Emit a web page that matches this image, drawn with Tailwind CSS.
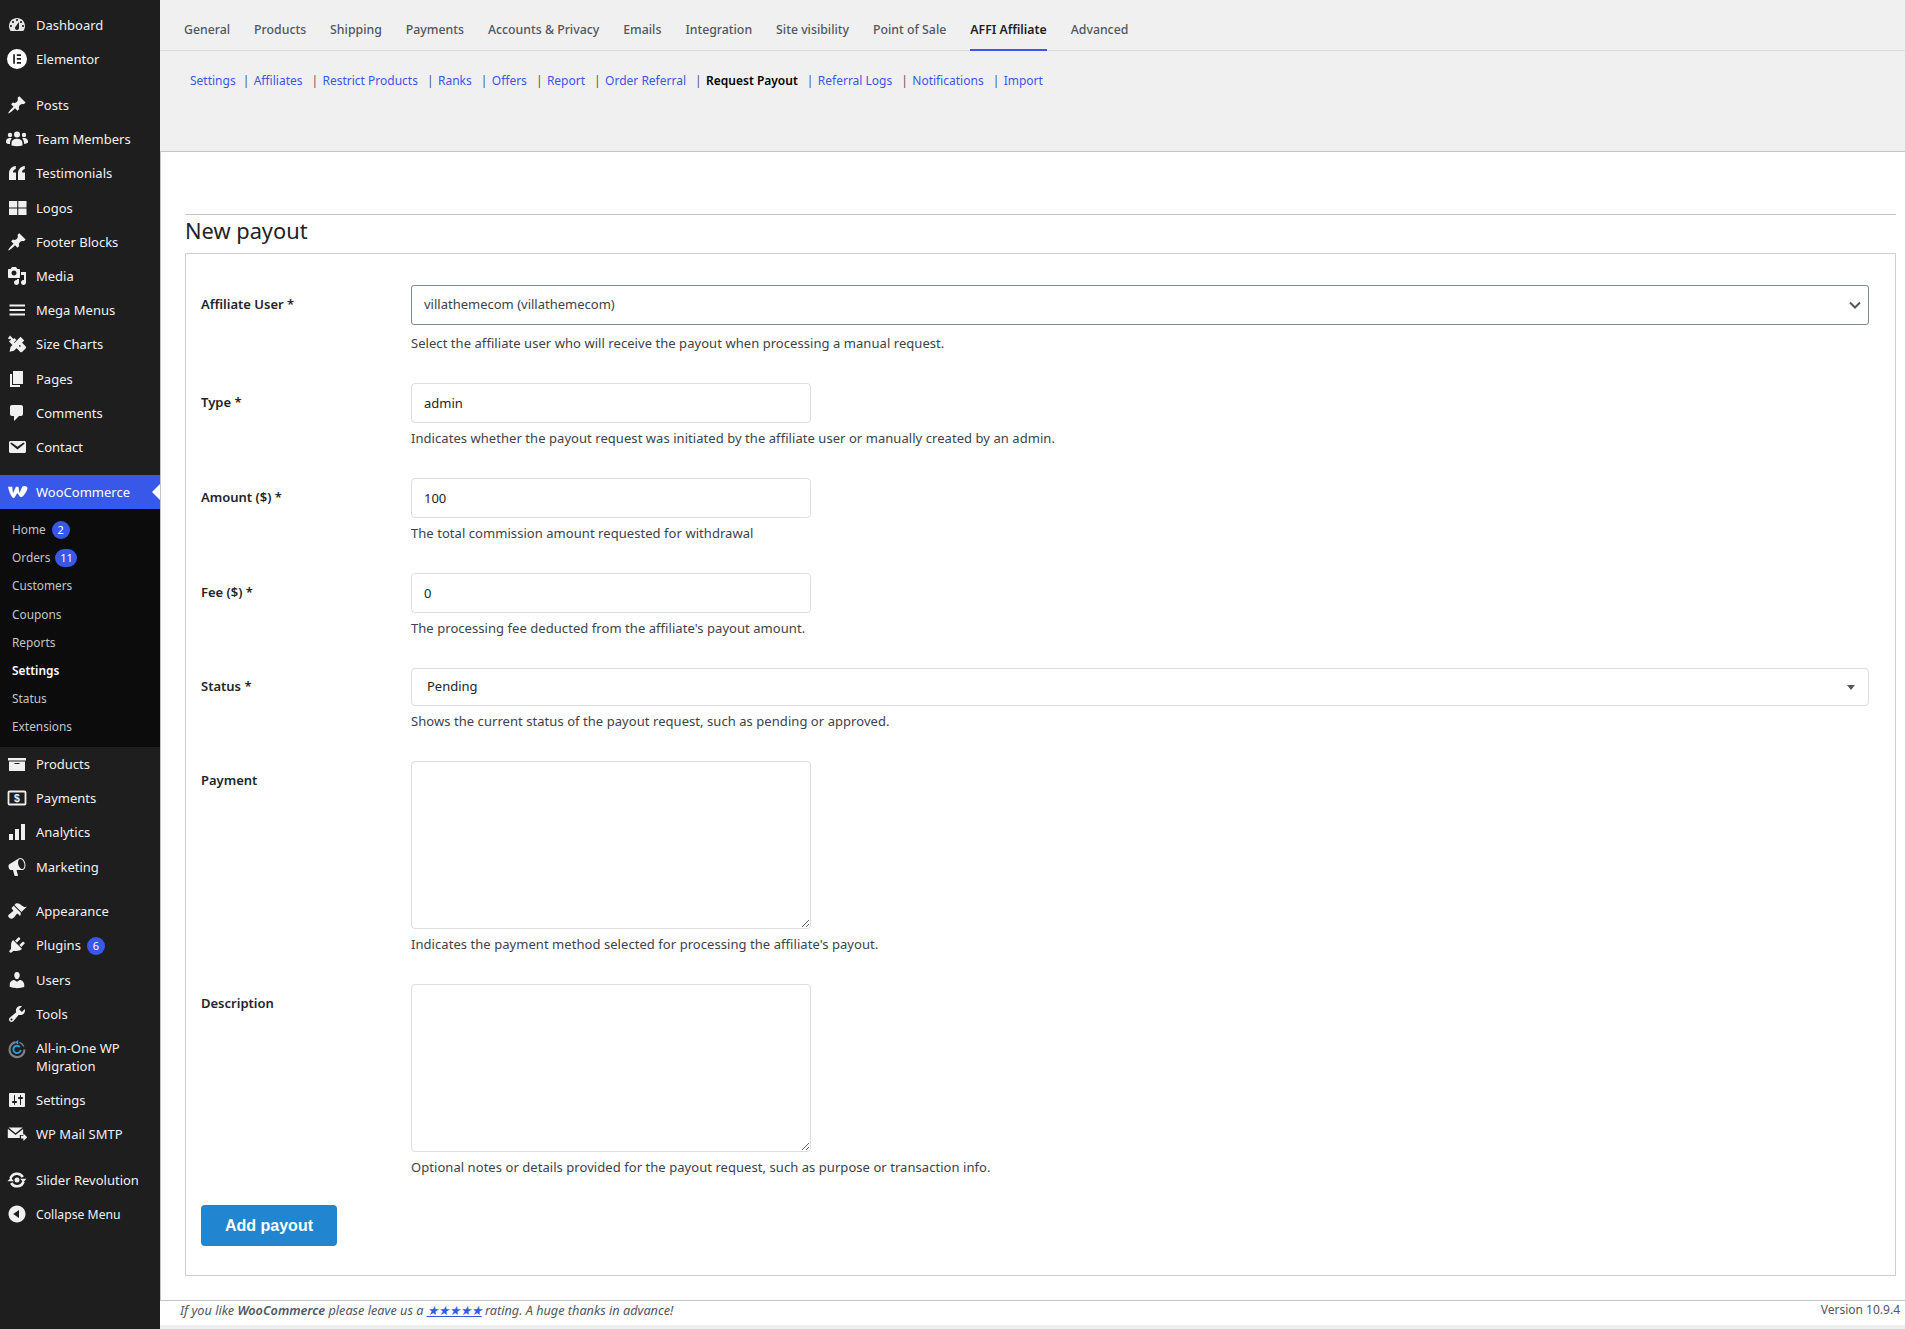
<!DOCTYPE html>
<html lang="en">
<head>
<meta charset="utf-8">
<title>New payout</title>
<script src="https://cdn.jsdelivr.net/npm/@tailwindcss/browser@4"></script>
</head>
<body class="bg-[#f0f0f1] font-['Noto_Sans',sans-serif] text-[13px] text-[#3c434a]">
<div class="flex w-[1905px] h-[1329px] overflow-hidden">
  <aside class="w-[160px] shrink-0 bg-[#1e1e1e] pt-[8px] text-[13px] text-[#f0f0f1] [&_a]:pt-[1.500px] [&_svg]:-mt-[1.500px]">
    <a class="flex items-center h-[34.2px] pl-[7px] gap-[9px]"><svg class="w-5 h-5 shrink-0" viewBox="0 0 20 20" fill="#e6e6e6"><path fill-rule="evenodd" d="M3.76 16h12.48c1.1-1.37 1.76-3.11 1.76-5 0-4.42-3.58-8-8-8s-8 3.58-8 8c0 1.89.66 3.63 1.76 5zM10 4c.55 0 1 .45 1 1s-.45 1-1 1-1-.45-1-1 .45-1 1-1zM6 6c.55 0 1 .45 1 1s-.45 1-1 1-1-.45-1-1 .45-1 1-1zm8 0c.55 0 1 .45 1 1s-.45 1-1 1-1-.45-1-1 .45-1 1-1zm-5.37 5.55L12 7v6c0 1.1-.9 2-2 2s-2-.9-2-2c0-.57.24-1.08.63-1.45zM4 10c.55 0 1 .45 1 1s-.45 1-1 1-1-.45-1-1 .45-1 1-1zm12 0c.55 0 1 .45 1 1s-.45 1-1 1-1-.45-1-1 .45-1 1-1z"/></svg>Dashboard</a>
    <a class="flex items-center h-[34.2px] pl-[7px] gap-[9px]"><svg class="w-5 h-5 shrink-0" viewBox="0 0 20 20" fill="#fff"><path fill-rule="evenodd" d="M10 0a10 10 0 1 0 0 20 10 10 0 0 0 0-20zM6.2 5.2h1.7v9.6H6.2zm3.6 0h4.2v1.7H9.8zm0 3.9h4.2v1.7H9.8zm0 3.9h4.2v1.8H9.8z"/></svg>Elementor</a>

    <a class="flex items-center h-[34.2px] pl-[7px] gap-[9px] mt-[11.6px]"><svg class="w-5 h-5 shrink-0" viewBox="0 0 20 20" fill="#f0f0f1"><path d="M10.44 3.02l1.82-1.82 6.36 6.35-1.83 1.82c-1.05-.68-2.48-.57-3.41.36l-.75.75c-.92.93-1.04 2.35-.35 3.41l-1.83 1.82-2.41-2.41-2.8 2.79c-.42.42-3.38 2.71-3.8 2.29s1.86-3.39 2.28-3.81l2.79-2.79L4.1 9.36l1.83-1.82c1.05.69 2.48.57 3.4-.36l.75-.75c.93-.92 1.05-2.35.36-3.41z"/></svg>Posts</a>
    <a class="flex items-center h-[34.2px] pl-[6px] gap-[8px]"><svg class="w-[22px] h-[22px] shrink-0" viewBox="0 0 22 18" fill="#f0f0f1"><circle cx="11" cy="4.500" r="3"/><circle cx="4" cy="5" r="2.200"/><circle cx="18" cy="5" r="2.200"/><path d="M5.500 15.500v-2.300c0-2.700 2-4.400 5.500-4.400s5.500 1.700 5.500 4.400v2.300c-3.400 1-7.600 1-11 0zM0 12.800v-1.500c0-2 1.500-3.300 3.900-3.300.8 0 1.400.2 1.900.4-1 .9-1.700 2.300-1.800 4.300v1.300C2.500 14.300 1 13.700 0 12.800zM22 12.800v-1.500c0-2-1.500-3.300-3.900-3.300-.8 0-1.400.2-1.900.4 1 .9 1.700 2.300 1.800 4.300v1.300c1.500-.2 3-.8 4-1.200z"/></svg>Team Members</a>
    <a class="flex items-center h-[34.2px] pl-[7px] gap-[9px]"><svg class="w-5 h-5 shrink-0" viewBox="0 0 20 20" fill="#f0f0f1"><path d="M2 17V10.500C2 6.500 4.500 3.500 8.800 3v3C6.900 6.400 6 7.600 6 9.500h3V17zM11 17V10.500C11 6.500 13.500 3.500 17.800 3v3c-1.900.4-2.800 1.600-2.800 3.500h3V17z"/></svg>Testimonials</a>
    <a class="flex items-center h-[34.2px] pl-[7px] gap-[9px]"><svg class="w-5 h-5 shrink-0" viewBox="0 0 20 20" fill="#f0f0f1"><path d="M2 3h8.200v6.500H2zM11.300 3H19.500v6.500h-8.200zM2 10.600h8.200V17H2zM11.300 10.600H19.500V17h-8.200z"/></svg>Logos</a>
    <a class="flex items-center h-[34.2px] pl-[7px] gap-[9px]"><svg class="w-5 h-5 shrink-0" viewBox="0 0 20 20" fill="#f0f0f1"><path d="M10.44 3.02l1.82-1.82 6.36 6.35-1.83 1.82c-1.05-.68-2.48-.57-3.41.36l-.75.75c-.92.93-1.04 2.35-.35 3.41l-1.83 1.82-2.41-2.41-2.8 2.79c-.42.42-3.38 2.71-3.8 2.29s1.86-3.39 2.28-3.81l2.79-2.79L4.1 9.36l1.83-1.82c1.05.69 2.48.57 3.4-.36l.75-.75c.93-.92 1.05-2.35.36-3.41z"/></svg>Footer Blocks</a>
    <a class="flex items-center h-[34.2px] pl-[7px] gap-[9px]"><svg class="w-5 h-5 shrink-0" viewBox="0 0 20 20" fill="#f0f0f1"><path fill-rule="evenodd" d="M13 11V4c0-.55-.45-1-1-1h-1.67L9 1H5L3.670 3H2c-.55 0-1 .45-1 1v7c0 .55.45 1 1 1h10c.55 0 1-.45 1-1zM7 4.500c1.380 0 2.500 1.120 2.500 2.500S8.380 9.500 7 9.500 4.500 8.380 4.500 7 5.620 4.500 7 4.500zM14 6h5v10.500c0 1.380-1.120 2.500-2.500 2.500S14 17.880 14 16.500s1.120-2.500 2.500-2.500c.17 0 .34.02.5.05V9h-3V6zm-4 8.050V13h2v3.500c0 1.380-1.120 2.500-2.500 2.500S7 17.880 7 16.500 8.120 14 9.500 14c.17 0 .34.02.5.05z"/></svg>Media</a>
    <a class="flex items-center h-[34.2px] pl-[7px] gap-[9px]"><svg class="w-5 h-5 shrink-0" viewBox="0 0 20 20" fill="#f0f0f1"><path d="M18 6.500V4.500H2.500v2H18zm0 4.500V9H2.500v2H18zm0 4.500v-2H2.500v2H18z"/></svg>Mega Menus</a>
    <a class="flex items-center h-[34.2px] pl-[7px] gap-[9px]"><svg class="w-5 h-5 shrink-0" viewBox="0 0 20 20" fill="#f0f0f1"><path d="M3 1.500l3.400 3.400 1-1 2 2L6.900 8.400l2 2-2 2L2 7.500l2-2-.9-.9-.9.9L1 4.300zM13.500 2.800l3.700 3.700L7 16.700l-4.400 1 .9-4.600zM12.700 10.700l2.200-2.200 3.900 3.900c.5.500.5 1.300 0 1.800l-3.700 3.700c-.5.500-1.300.5-1.800 0l-3.900-3.900 2.200-2.200 1.300 1.300 1-1-1.300-1.300z"/></svg>Size Charts</a>
    <a class="flex items-center h-[34.2px] pl-[7px] gap-[9px]"><svg class="w-5 h-5 shrink-0" viewBox="0 0 20 20" fill="#f0f0f1"><path d="M6 15V2h10v13H6zm-1 1h8v2H3V5h2v11z"/></svg>Pages</a>
    <a class="flex items-center h-[34.2px] pl-[7px] gap-[9px]"><svg class="w-5 h-5 shrink-0" viewBox="0 0 20 20" fill="#f0f0f1"><path d="M5 2h9c1.100 0 2 .9 2 2v7c0 1.100-.9 2-2 2h-2l-5 5v-5H5c-1.100 0-2-.9-2-2V4c0-1.100.9-2 2-2z"/></svg>Comments</a>
    <a class="flex items-center h-[34.2px] pl-[7px] gap-[9px]"><svg class="w-5 h-5 shrink-0" viewBox="0 0 20 20" fill="#f0f0f1"><path fill-rule="evenodd" d="M3.870 4h13.250C18.370 4 19 4.590 19 5.790v8.420c0 1.190-.63 1.790-1.880 1.790H3.870c-1.250 0-1.880-.6-1.880-1.790V5.790c0-1.200.63-1.790 1.880-1.790zm6.620 8.600l6.740-5.530c.24-.2.43-.66.13-1.070-.29-.41-.82-.42-1.170-.17l-5.700 3.860L4.800 5.830c-.35-.25-.88-.24-1.170.17-.3.41-.11.870.13 1.070z"/></svg>Contact</a>

    <div class="mt-[11px]">
      <a class="relative flex items-center h-[34px] pl-[7px] gap-[8px] bg-[#3858e9] text-white"><svg class="w-[21px] h-5 shrink-0" viewBox="0 0 21 20" fill="#fff"><path d="M1 4.800h4.200l.8 6.400 2.900-6.400h2.600l1 6.400c1-2.500 2-5.200 2.800-6.400.5-.7 1.400-.9 2.400-.8 1.600.1 2.800 1 2.800 2.300 0 1.800-3 6.800-5.200 8.400-.9.6-2 .5-2.500-.3L10.300 11l-2.500 4.300c-.5.800-1.700.9-2.400.2C3.500 13.600 2 9 1 4.800z"/></svg>WooCommerce<span class="absolute right-0 top-[9px] w-0 h-0 border-y-[8px] border-y-transparent border-r-[8px] border-r-white"></span></a>
      <div class="bg-[#0c0c0c] pt-[6px] pb-[6.400px] text-[11.850px] text-[#c3c4c7]">
        <a class="flex items-center h-[28.200px] pl-[12px]">Home<span class="ml-[6px] w-[18px] h-[18px] rounded-full bg-[#3858e9] text-white text-[11px] flex items-center justify-center">2</span></a>
        <a class="flex items-center h-[28.200px] pl-[12px]">Orders<span class="ml-[5px] w-[22px] h-[18px] rounded-full bg-[#3858e9] text-white text-[11px] flex items-center justify-center">11</span></a>
        <a class="flex items-center h-[28.200px] pl-[12px]">Customers</a>
        <a class="flex items-center h-[28.200px] pl-[12px]">Coupons</a>
        <a class="flex items-center h-[28.200px] pl-[12px]">Reports</a>
        <a class="flex items-center h-[28.200px] pl-[12px] font-semibold text-white">Settings</a>
        <a class="flex items-center h-[28.200px] pl-[12px]">Status</a>
        <a class="flex items-center h-[28.200px] pl-[12px]">Extensions</a>
      </div>
    </div>
    <a class="flex items-center h-[34.2px] pl-[7px] gap-[9px]"><svg class="w-5 h-5 shrink-0" viewBox="0 0 20 20" fill="#f0f0f1"><path fill-rule="evenodd" d="M19 4v2.500H1V4h18zM2 7.500h16V17H2V7.500zM7.500 10h5V9h-5z"/></svg>Products</a>
    <a class="flex items-center h-[34.2px] pl-[7px] gap-[9px]"><svg class="w-5 h-5 shrink-0" viewBox="0 0 20 20"><rect x="1.500" y="3.500" width="17" height="13" rx="1" fill="none" stroke="#f0f0f1" stroke-width="1.800"/><text x="10" y="14" text-anchor="middle" font-size="10.500" font-weight="700" fill="#f0f0f1" font-family="Liberation Sans">$</text></svg>Payments</a>
    <a class="flex items-center h-[34.2px] pl-[7px] gap-[9px]"><svg class="w-5 h-5 shrink-0" viewBox="0 0 20 20" fill="#f0f0f1"><path d="M18 18V2h-4v16h4zm-6 0V7H8v11h4zm-6 0v-6H2v6h4z"/></svg>Analytics</a>
    <a class="flex items-center h-[34.2px] pl-[7px] gap-[9px]"><svg class="w-5 h-5 shrink-0" viewBox="0 0 20 20" fill="#f0f0f1"><path fill-rule="evenodd" d="M18.150 5.940c.46 1.620.38 3.220-.02 4.480-.42 1.280-1.260 2.180-2.300 2.480-.16.06-.26.06-.4.06-.06.02-.12.02-.18.02-.06.02-.14.02-.22.02H9.500l1.500 5.500c.02.14-.06.26-.14.34-.08.1-.24.16-.34.16H7.950c-.1 0-.26-.06-.34-.16-.08-.08-.16-.2-.14-.34l-1.500-5.500H4.250c-.5.06-1.080-.18-1.540-.62s-.88-1.080-1.060-1.880c-.24-.8-.2-1.560-.02-2.200.18-.62.58-1.080 1.060-1.300l9-5.400c.1-.06.18-.1.24-.16.06-.04.14-.08.24-.12.16-.08.28-.12.5-.18 1.040-.3 2.240.1 3.220.98s1.840 2.240 2.260 3.860zm-2.580 5.980c.4-.1.740-.34 1.040-.7.58-.7.860-1.760.860-3.040-.02-.64-.1-1.300-.28-1.980-.34-1.360-1.020-2.500-1.780-3.240s-1.680-1.100-2.460-.88c-.82.22-1.400.96-1.700 2-.32 1.040-.28 2.360.06 3.720.38 1.360 1 2.500 1.800 3.240.78.74 1.620 1.100 2.460.88z"/></svg>Marketing</a>

    <a class="flex items-center h-[34.2px] pl-[7px] gap-[9px] mt-[10.500px]"><svg class="w-5 h-5 shrink-0" viewBox="0 0 20 20" fill="#f0f0f1"><path d="M14.480 11.060L7.410 3.990l1.500-1.500c.5-.56 2.300-.47 3.510.32 1.210.8 1.430 1.280 2.910 2.100 1.180.64 2.450 1.260 4.450.85zm-.71.71L6.700 4.700 4.930 6.470c-.39.39-.39 1.020 0 1.410l1.060 1.060c.39.39.39 1.030 0 1.420-.6.6-1.430 1.110-2.210 1.690-.35.26-.7.53-1.010.84C1.430 13.230.4 14.940 2.270 16.800c1.870 1.870 3.570.84 4.920-.5.31-.31.58-.66.84-1.010.58-.78 1.090-1.610 1.690-2.210.39-.39 1.020-.39 1.410 0l1.060 1.060c.39.39 1.020.39 1.410 0z"/></svg>Appearance</a>
    <a class="flex items-center h-[34.2px] pl-[7px] gap-[9px]"><svg class="w-5 h-5 shrink-0" viewBox="0 0 20 20" fill="#f0f0f1"><path d="M13.110 4.360L9.870 7.600 8 5.730l3.240-3.240c.35-.34 1.050-.2 1.560.32.52.51.66 1.210.31 1.550zm-8 1.770l.91-1.120 9.010 9.010-1.190.84c-.71.71-2.630 1.160-3.820 1.160H6.140L4.900 17.260c-.59.59-1.540.59-2.120 0-.59-.58-.59-1.530 0-2.120l1.240-1.240v-3.880c0-1.130.4-3.190 1.090-3.890zm7.260 3.970l3.240-3.240c.34-.35 1.040-.21 1.550.31.52.51.66 1.210.31 1.550l-3.240 3.250z"/></svg><span class="flex items-center">Plugins<span class="ml-[6px] w-[18px] h-[18px] rounded-full bg-[#3858e9] text-white text-[11px] flex items-center justify-center">6</span></span></a>
    <a class="flex items-center h-[34.2px] pl-[7px] gap-[9px]"><svg class="w-5 h-5 shrink-0" viewBox="0 0 20 20" fill="#f0f0f1"><path d="M10 9.250c-2.270 0-2.730-3.440-2.730-3.440C7 4.020 7.820 2 9.970 2c2.160 0 2.980 2.020 2.710 3.810 0 0-.41 3.440-2.680 3.440zm0 2.570L12.720 10c2.390 0 4.520 2.330 4.520 4.530v2.490s-3.650 1.130-7.240 1.130c-3.650 0-7.240-1.130-7.240-1.130v-2.490c0-2.250 1.940-4.480 4.470-4.480z"/></svg>Users</a>
    <a class="flex items-center h-[34.2px] pl-[7px] gap-[9px]"><svg class="w-5 h-5 shrink-0" viewBox="0 0 20 20" fill="#f0f0f1"><path fill-rule="evenodd" d="M16.680 9.770c-1.340 1.340-3.300 1.670-4.950.99l-5.410 6.520c-.99.99-2.590.99-3.580 0s-.99-2.590 0-3.570l6.520-5.420c-.68-1.650-.35-3.610.99-4.950 1.280-1.280 3.120-1.620 4.720-1.060l-2.890 2.890 2.820 2.820 2.860-2.870c.53 1.580.18 3.390-1.080 4.650zM3.810 16.210c.4.39 1.040.39 1.430 0 .4-.4.4-1.040 0-1.440-.39-.39-1.030-.39-1.430 0-.39.4-.39 1.040 0 1.440z"/></svg>Tools</a>
    <a class="flex items-center h-[52px] pl-[7px] gap-[9px] leading-[18px]"><svg class="w-5 h-5 shrink-0 relative -top-[8px]" viewBox="0 0 20 20" fill="none"><path d="M8.500 3.200A7.500 7.500 0 1 0 17.500 10.500" stroke="#7d8287" stroke-width="2.200"/><path d="M12.500 3.400A7 7 0 0 1 16.800 7.500" stroke="#7d8287" stroke-width="1.400"/><path d="M12.800 8A3.700 3.700 0 1 0 13.700 10.800" stroke="#2f9fd8" stroke-width="1.900"/><path d="M8 3.200l3.200-2.200v4.600z" fill="#2f9fd8"/></svg><span class="relative -top-[1px]">All-in-One WP<br>Migration</span></a>
    <a class="flex items-center h-[34.2px] pl-[7px] gap-[9px]"><svg class="w-5 h-5 shrink-0" viewBox="0 0 20 20" fill="#f0f0f1"><path fill-rule="evenodd" d="M18 16V4c0-.55-.45-1-1-1H3c-.55 0-1 .45-1 1v12c0 .55.45 1 1 1h14c.55 0 1-.45 1-1zM8 11h1c.55 0 1 .45 1 1s-.45 1-1 1H8v1.500c0 .28-.22.5-.5.5s-.5-.22-.5-.5V13H6c-.55 0-1-.45-1-1s.45-1 1-1h1V5.500c0-.28.22-.5.5-.5s.5.22.5.5V11zm5-2h-1c-.55 0-1-.45-1-1s.45-1 1-1h1V5.500c0-.28.22-.5.5-.5s.5.22.5.5V7h1c.55 0 1 .45 1 1s-.45 1-1 1h-1v5.500c0 .28-.22.5-.5.5s-.5-.22-.5-.5V9z"/></svg>Settings</a>
    <a class="flex items-center h-[34.2px] pl-[7px] gap-[9px]"><svg class="w-5 h-5 shrink-0" viewBox="0 0 20 20" fill="#f0f0f1"><path d="M1.500 3.500h14.200L8.600 9.300zM.8 4.800l7.800 6.300 7.500-6.100v6h-3.300v3H.8zM14 11.800h2.400V9.600l3.800 3.600-3.800 3.700v-2.300H14z"/></svg>WP Mail SMTP</a>

    <a class="flex items-center h-[34.2px] pl-[7px] gap-[9px] mt-[11.500px]"><svg class="w-5 h-5 shrink-0" viewBox="0 0 20 20" fill="none"><path d="M3.500 8.500A6.800 6.800 0 0 1 15.800 7" stroke="#f0f0f1" stroke-width="2.600"/><path d="M16.500 11.500A6.800 6.800 0 0 1 4.200 13" stroke="#f0f0f1" stroke-width="2.600"/><path d="M19.500 8.800h-6.500l3.300 3.400zM.5 11.200h6.500L3.700 7.800z" fill="#f0f0f1"/><circle cx="10" cy="10" r="2.500" fill="#f0f0f1"/></svg>Slider Revolution</a>
    <a class="flex items-center h-[34.2px] pl-[7px] gap-[9px] text-[12.200px]"><svg class="w-5 h-5 shrink-0" viewBox="0 0 20 20" fill="#f0f0f1"><path fill-rule="evenodd" d="M10 1.500c4.700 0 8.500 3.800 8.500 8.500s-3.800 8.500-8.500 8.500S1.500 14.700 1.500 10 5.300 1.500 10 1.500zm2 12.380V6.120L6.180 9.970z"/></svg>Collapse Menu</a>
  </aside>

  <main class="flex-1 min-w-0 flex flex-col">
    <nav class="h-[51px] shrink-0 border-b border-[#dcdcde] pl-[24px] flex gap-[24px] text-[12.300px] font-medium text-[#50575e]">
      <a class="h-[51px] leading-[59px]">General</a>
      <a class="h-[51px] leading-[59px]">Products</a>
      <a class="h-[51px] leading-[59px]">Shipping</a>
      <a class="h-[51px] leading-[59px]">Payments</a>
      <a class="h-[51px] leading-[59px]">Accounts &amp; Privacy</a>
      <a class="h-[51px] leading-[59px]">Emails</a>
      <a class="h-[51px] leading-[59px]">Integration</a>
      <a class="h-[51px] leading-[59px]">Site visibility</a>
      <a class="h-[51px] leading-[59px]">Point of Sale</a>
      <a class="h-[51px] leading-[59px] border-b-2 border-[#3858e9] text-[#1e1e1e] font-semibold">AFFI Affiliate</a>
      <a class="h-[51px] leading-[59px]">Advanced</a>
    </nav>
    <div class="h-[101px] shrink-0 border-b border-[#c3c4c7] pl-[30px] pt-[20px] text-[12px] leading-[20px] text-[#3858e9] flex">
      <a>Settings</a><span class="ml-[7px] mr-[4.400px] text-[#50575e]">|</span>
      <a>Affiliates</a><span class="ml-[9px] mr-[4.400px] text-[#50575e]">|</span>
      <a>Restrict Products</a><span class="ml-[9px] mr-[4.400px] text-[#50575e]">|</span>
      <a>Ranks</a><span class="ml-[9px] mr-[4.400px] text-[#50575e]">|</span>
      <a>Offers</a><span class="ml-[9px] mr-[4.400px] text-[#50575e]">|</span>
      <a>Report</a><span class="ml-[9px] mr-[4.400px] text-[#50575e]">|</span>
      <a>Order Referral</a><span class="ml-[9px] mr-[4.400px] text-[#50575e]">|</span>
      <a class="text-black font-semibold">Request Payout</a><span class="ml-[9px] mr-[4.400px] text-[#50575e]">|</span>
      <a>Referral Logs</a><span class="ml-[9px] mr-[4.400px] text-[#50575e]">|</span>
      <a>Notifications</a><span class="ml-[9px] mr-[4.400px] text-[#50575e]">|</span>
      <a>Import</a>
    </div>
    <div class="h-[1149px] shrink-0 bg-white border-l border-b border-[#c3c4c7] pl-[24px] pr-[9px] pt-[62px]">
      <div class="border-t border-[#c3c4c7] h-[39px] text-[21.800px] leading-[31px] text-[#1d2327]">New payout</div>
      <form class="h-[1023px] border border-[#ccd0d4] pl-[15px] pr-[26px] pt-[31px]">
        <div class="flex h-[98px]">
          <label class="w-[210px] shrink-0 pt-[9px] leading-[20px] font-semibold text-[#212529]">Affiliate User *</label>
          <div class="flex-1">
            <div class="relative">
              <select class="appearance-none block w-full h-[40px] border border-[#7e8993] rounded-[3px] pl-[12px] text-[13px] text-[#3c434a] bg-white"><option>villathemecom (villathemecom)</option></select>
              <svg class="absolute right-[8px] top-[14px] w-[12px] h-[12px]" viewBox="0 0 12 12" fill="none" stroke="#50575e" stroke-width="2"><path d="M1 3.500l5 5 5-5"/></svg>
            </div>
            <p class="mt-[8px] leading-[20px] tracking-[0.055px]">Select the affiliate user who will receive the payout when processing a manual request.</p>
          </div>
        </div>
        <div class="flex h-[95px]">
          <label class="w-[210px] shrink-0 pt-[9px] leading-[20px] font-semibold text-[#212529]">Type *</label>
          <div class="flex-1">
            <input class="block w-[400px] h-[40px] border border-[#dedede] rounded-[4px] pl-[12px] text-[13px] text-[#212529]" value="admin">
            <p class="mt-[5px] leading-[20px] tracking-[0.055px]">Indicates whether the payout request was initiated by the affiliate user or manually created by an admin.</p>
          </div>
        </div>
        <div class="flex h-[95px]">
          <label class="w-[210px] shrink-0 pt-[9px] leading-[20px] font-semibold text-[#212529]">Amount ($) *</label>
          <div class="flex-1">
            <input class="block w-[400px] h-[40px] border border-[#dedede] rounded-[4px] pl-[12px] text-[13px] text-[#212529]" value="100">
            <p class="mt-[5px] leading-[20px] tracking-[0.055px]">The total commission amount requested for withdrawal</p>
          </div>
        </div>
        <div class="flex h-[95px]">
          <label class="w-[210px] shrink-0 pt-[9px] leading-[20px] font-semibold text-[#212529]">Fee ($) *</label>
          <div class="flex-1">
            <input class="block w-[400px] h-[40px] border border-[#dedede] rounded-[4px] pl-[12px] text-[13px] text-[#212529]" value="0">
            <p class="mt-[5px] leading-[20px] tracking-[0.055px]">The processing fee deducted from the affiliate's payout amount.</p>
          </div>
        </div>
        <div class="flex h-[93px]">
          <label class="w-[210px] shrink-0 pt-[8px] leading-[20px] font-semibold text-[#212529]">Status *</label>
          <div class="flex-1">
            <div class="relative">
              <select class="appearance-none block w-full h-[38px] border border-[#dedede] rounded-[4px] pl-[15px] text-[13px] text-[#212529] bg-white"><option>Pending</option></select>
              <span class="absolute right-[14px] top-[17px] w-0 h-0 border-x-[4px] border-x-transparent border-t-[5px] border-t-[#50575e]"></span>
            </div>
            <p class="mt-[5px] leading-[20px] tracking-[0.055px]">Shows the current status of the payout request, such as pending or approved.</p>
          </div>
        </div>
        <div class="flex h-[223px]">
          <label class="w-[210px] shrink-0 pt-[9px] leading-[20px] font-semibold text-[#212529]">Payment</label>
          <div class="flex-1">
            <textarea class="block w-[400px] h-[168px] border border-[#dedede] rounded-[4px]"></textarea>
            <p class="mt-[5px] leading-[20px] tracking-[0.055px]">Indicates the payment method selected for processing the affiliate's payout.</p>
          </div>
        </div>
        <div class="flex h-[221px]">
          <label class="w-[210px] shrink-0 pt-[9px] leading-[20px] font-semibold text-[#212529]">Description</label>
          <div class="flex-1">
            <textarea class="block w-[400px] h-[168px] border border-[#dedede] rounded-[4px]"></textarea>
            <p class="mt-[5px] leading-[20px] tracking-[0.055px]">Optional notes or details provided for the payout request, such as purpose or transaction info.</p>
          </div>
        </div>
        <button type="button" class="w-[136px] h-[41px] rounded-[4px] bg-[#2185d0] text-white font-['Liberation_Sans',sans-serif] font-bold text-[16px]">Add payout</button>
      </form>
    </div>
    <div class="h-[24px] shrink-0 bg-white pl-[20px] pr-[5px] flex justify-between leading-[18px] text-[#50575e]">
      <p class="italic text-[12.700px]">If you like <strong class="font-semibold">WooCommerce</strong> please leave us a <a class="text-[#3858e9] underline">★★★★★</a> rating. A huge thanks in advance!</p>
      <p class="text-[12px]">Version 10.9.4</p>
    </div>
  </main>
</div>
</body>
</html>
